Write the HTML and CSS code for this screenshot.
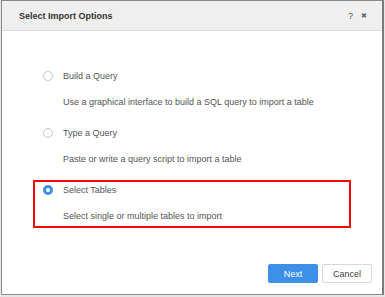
FILE: index.html
```html
<!DOCTYPE html>
<html>
<head>
<meta charset="utf-8">
<link rel="stylesheet" href="styles.css">
</head>
<body>
<div class="dialog">
  <div class="header">
    <span class="title">Select Import Options</span>
    <span class="tools"><span class="help">?</span><span class="close">&#x2716;</span></span>
  </div>
  <div class="content">
    <div class="option">
      <div class="row"><span class="radio"></span><span class="label">Build a Query</span></div>
      <div class="desc">Use a graphical interface to build a SQL query to import a table</div>
    </div>
    <div class="option">
      <div class="row"><span class="radio"></span><span class="label">Type a Query</span></div>
      <div class="desc">Paste or write a query script to import a table</div>
    </div>
    <div class="option selected">
      <div class="row"><span class="radio checked"></span><span class="label">Select Tables</span></div>
      <div class="desc">Select single or multiple tables to import</div>
    </div>
  </div>
  <div class="footer">
    <button class="btn primary">Next</button>
    <button class="btn">Cancel</button>
  </div>
</div>
</body>
</html>
```
FILE: styles.css
```css
html, body {
  margin: 0;
  padding: 0;
  background: #e6e6e6;
}
body {
  width: 385px;
  height: 297px;
  font-family: "Liberation Sans", Arial, sans-serif;
  font-size: 9px;
  color: #555;
}
.dialog {
  box-sizing: border-box;
  margin-left: 1px;
  width: 383px;
  height: 295px;
  background: #fff;
  border: 1px solid #8a8a8a;
  border-right: 2px solid #7a7a7a;
  display: flex;
  flex-direction: column;
}
.header {
  height: 29px;
  flex: none;
  background: #efefef;
  border-bottom: 1px solid #dcdcdc;
  display: flex;
  align-items: center;
  justify-content: space-between;
  padding: 0 15px 0 17px;
}
.title {
  font-weight: bold;
  color: #333;
  font-size: 9px;
}
.tools {
  display: flex;
  align-items: center;
  gap: 8px;
  color: #555;
}
.help {
  font-size: 9px;
}
.close {
  font-size: 7px;
  color: #666;
}
.content {
  flex: 1;
  padding: 35px 0 0 31px;
  display: flex;
  flex-direction: column;
  gap: 9px;
}
.option {
  width: 318px;
  height: 48px;
  box-sizing: border-box;
  border: 2px solid transparent;
  padding: 0 8px;
}
.option.selected {
  border-color: #f00;
}
.row {
  height: 16px;
  display: flex;
  align-items: center;
  gap: 10px;
}
.radio {
  box-sizing: border-box;
  width: 10px;
  height: 10px;
  border-radius: 50%;
  border: 1px solid #c4c4c4;
  background: #fff;
}
.radio.checked {
  border: 3px solid #3d8fe8;
}
.label {
  color: #555;
}
.desc {
  margin-top: 10px;
  margin-left: 20px;
  height: 16px;
  line-height: 16px;
}
.footer {
  flex: none;
  display: flex;
  justify-content: flex-end;
  gap: 4px;
  padding: 0 10px 11px 0;
}
.btn {
  width: 50px;
  height: 19px;
  box-sizing: border-box;
  font-family: "Liberation Sans", Arial, sans-serif;
  font-size: 9px;
  border: 1px solid #d8d8d8;
  background: #fff;
  color: #444;
  border-radius: 2px;
  padding: 0;
}
.btn.primary {
  background: #3d8fe8;
  border-color: #3d8fe8;
  color: #fff;
}
```
